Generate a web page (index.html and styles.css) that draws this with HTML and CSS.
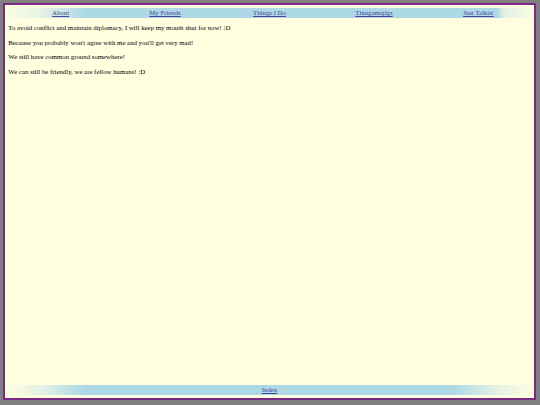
FILE: index.html
```html
<!DOCTYPE html>
<html>
<head>
<meta charset="utf-8">
<title>Diplomacy</title>
<link rel="stylesheet" href="styles.css">
</head>
<body>
<div class="frame">
  <nav class="nav">
    <a href="#">About</a>
    <a href="#">My Friends</a>
    <a href="#">Things I Do</a>
    <a href="#">Thingamajigs</a>
    <a href="#">Just Talkin'</a>
  </nav>
  <main class="main">
    <p>To avoid conflict and maintain diplomacy, I will keep my mouth shut for now! :D</p>
    <p>Because you probably won't agree with me and you'll get very mad!</p>
    <p>We still have common ground somewhere!</p>
    <p>We can still be friendly, we are fellow humans! :D</p>
  </main>
  <footer class="foot">
    <a href="#">Index</a>
  </footer>
</div>
</body>
</html>
```
FILE: styles.css
```css
html {
  background: #808080;
}
body {
  margin: 3px 4px 5px 3px;
  font-family: "Liberation Serif", "Times New Roman", serif;
  font-size: 6.8px;
  line-height: 1.15;
  color: #000;
}
.frame {
  box-sizing: border-box;
  height: calc(100vh - 8px);
  border: 2px solid #7a2a84;
  background: #ffffe0;
  padding: 3.3px;
  display: flex;
  flex-direction: column;
}
a {
  color: #4f4298;
  text-decoration: underline;
}
.nav {
  display: grid;
  grid-template-columns: repeat(5, 1fr);
  text-align: center;
  padding: 0.8px 0;
  background: linear-gradient(to right, #fbfde2 0, #e8f3e4 30px, #add8e6 78px, #add8e6 calc(100% - 34px), #e3f1e6 calc(100% - 27px), #f7fbe3 100%);
}
.main {
  flex: 1;
}
.main p {
  margin: 6.6px 0;
}
.foot {
  text-align: center;
  padding: 0.8px 0;
  background: linear-gradient(to right, #fbfde2 0, #e8f3e4 30px, #add8e6 78px, #add8e6 calc(100% - 78px), #e8f3e4 calc(100% - 30px), #fbfde2 100%);
}
```
